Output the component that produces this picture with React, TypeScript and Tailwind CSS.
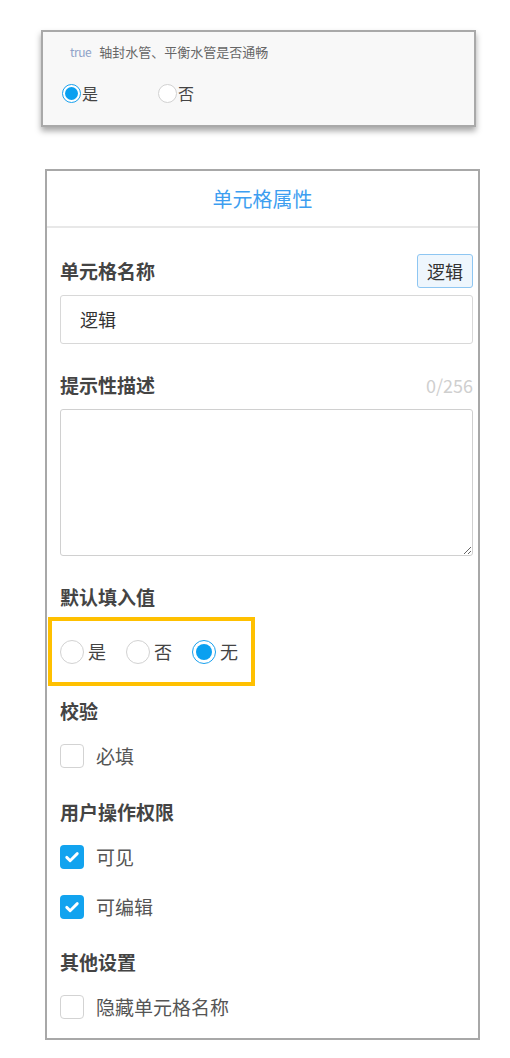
import React from 'react';

const font = { fontFamily: '"Noto Sans CJK SC", "Noto Sans", sans-serif' };

const Radio = ({ checked, size = 'lg' }: { checked?: boolean; size?: 'sm' | 'lg' }) => {
  const box = size === 'lg' ? 'w-[24px] h-[24px]' : 'w-[19px] h-[19px]';
  const dot = size === 'lg' ? 'w-[16px] h-[16px]' : 'w-[13px] h-[13px]';
  return (
    <span
      className={`${box} shrink-0 rounded-full flex items-center justify-center bg-white ${
        checked ? 'border-[1.5px] border-[#1aa1ee]' : 'border-[1.5px] border-[#d2d2d2]'
      }`}
    >
      {checked && <span className={`${dot} rounded-full bg-[#0aa0f0]`} />}
    </span>
  );
};

const Checkbox = ({ checked }: { checked?: boolean }) =>
  checked ? (
    <span className="w-[24px] h-[24px] rounded-[4px] bg-[#12a3ef] flex items-center justify-center shrink-0">
      <svg viewBox="0 0 24 24" className="w-[18px] h-[18px]" fill="none" stroke="white" strokeWidth={3.8} strokeLinecap="round" strokeLinejoin="round">
        <path d="M5 12.5l4.5 4.5L19 7.5" />
      </svg>
    </span>
  ) : (
    <span className="w-[24px] h-[24px] rounded-[4px] border border-[#d3d3d3] bg-white shrink-0" />
  );

const Label = ({ children, right, className = '' }: { children: React.ReactNode; right?: React.ReactNode; className?: string }) => (
  <div className={`h-[34px] flex items-center justify-between ${className}`}>
    <span className="text-[19px] font-semibold text-[#444]">{children}</span>
    {right}
  </div>
);

const CheckRow = ({ checked, text, className = '' }: { checked?: boolean; text: string; className?: string }) => (
  <div className={`h-[34px] flex items-center gap-[12px] ${className}`}>
    <Checkbox checked={checked} />
    <span className="text-[19px] text-[#555]">{text}</span>
  </div>
);

export default function App() {
  return (
    <div className="w-[510px] h-[1058px] bg-white relative overflow-hidden" style={font}>
      {/* preview card */}
      <div className="ml-[41px] mt-[30px] w-[435px] h-[97px] border-2 border-[#a9a9a9] bg-[#f8f8f8] shadow-[0_4px_6px_rgba(0,0,0,0.35)] pl-[19px]">
        <div className="h-[36px] flex items-center pl-[8px] pt-[4px]">
          <span className="text-[12px] text-[#8fa3c8] tracking-[-0.5px]">true</span>
          <span className="text-[13px] text-[#666] ml-[8px]">轴封水管、平衡水管是否通畅</span>
        </div>
        <div className="h-[50px] flex items-center">
          <div className="flex items-center w-[96px]">
            <Radio checked size="sm" />
            <span className="text-[16px] text-[#444] ml-[1px]">是</span>
          </div>
          <div className="flex items-center">
            <Radio size="sm" />
            <span className="text-[16px] text-[#444] ml-[1px]">否</span>
          </div>
        </div>
      </div>

      {/* properties panel */}
      <div className="ml-[45px] mt-[42px] w-[435px] h-[871px] border-2 border-[#a8a8a8] bg-white">
        <div className="h-[57px] flex items-center justify-center border-b-2 border-[#e8e8e8]">
          <span className="text-[20px] text-[#3d9ef0]">单元格属性</span>
        </div>
        <div className="pl-[13px] pr-[5px] flex flex-col">
          <Label
            className="mt-[26px]"
            right={
              <button className="h-[34px] w-[56px] border border-[#8ec6f2] bg-[#eef6fd] rounded-[3px] text-[18px] text-[#333]">
                逻辑
              </button>
            }
          >
            单元格名称
          </Label>
          <div className="mt-[7px] h-[49px] border border-[#d8d8d8] rounded-[3px] flex items-center pl-[19px] text-[18px] text-[#333]">
            逻辑
          </div>
          <Label className="mt-[24px]" right={<span className="text-[18px] text-[#cfcfcf]">0/256</span>}>
            提示性描述
          </Label>
          <textarea className="mt-[7px] h-[147px] border border-[#d0d0d0] rounded-[3px] outline-none resize-y" />
          <Label className="mt-[24px]">默认填入值</Label>
          <div className="mt-[3px] ml-[-12px] w-[207px] h-[69px] border-4 border-[#ffc000] flex items-center pl-[8px]">
            <div className="flex items-center gap-[4px]">
              <Radio />
              <span className="text-[18px] text-[#444]">是</span>
            </div>
            <div className="flex items-center gap-[4px] ml-[20px]">
              <Radio />
              <span className="text-[18px] text-[#444]">否</span>
            </div>
            <div className="flex items-center gap-[4px] ml-[20px]">
              <Radio checked />
              <span className="text-[18px] text-[#444]">无</span>
            </div>
          </div>
          <Label className="mt-[8px]">校验</Label>
          <CheckRow className="mt-[11px]" text="必填" />
          <Label className="mt-[22px]">用户操作权限</Label>
          <CheckRow className="mt-[11px]" checked text="可见" />
          <CheckRow className="mt-[16px]" checked text="可编辑" />
          <Label className="mt-[21px]">其他设置</Label>
          <CheckRow className="mt-[11px]" text="隐藏单元格名称" />
        </div>
      </div>
    </div>
  );
}
